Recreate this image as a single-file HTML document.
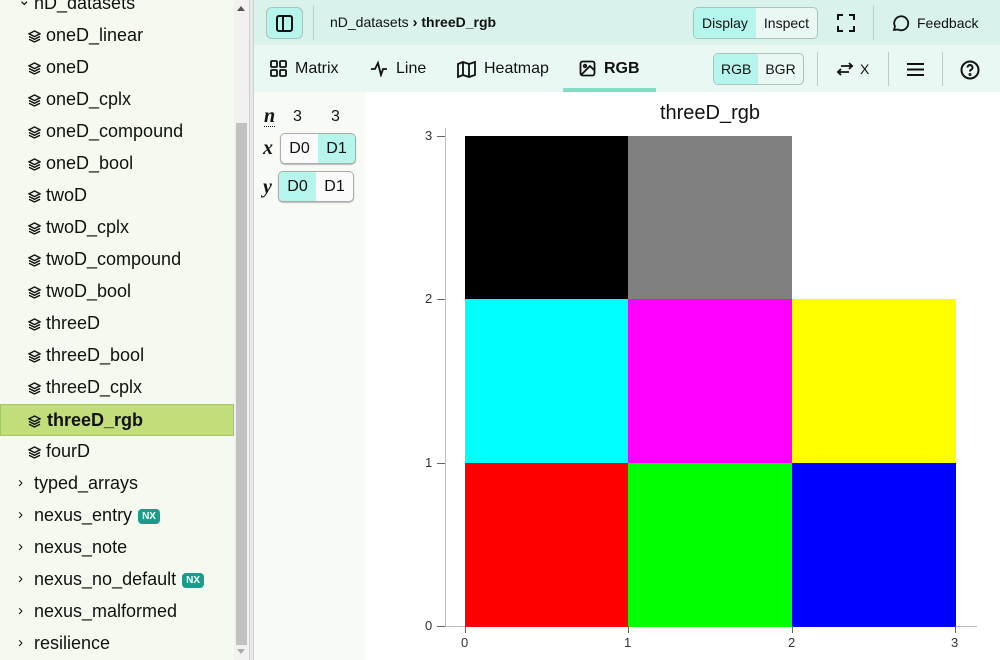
<!DOCTYPE html>
<html><head><meta charset="utf-8"><style>
*{box-sizing:border-box;margin:0;padding:0}
body{width:1000px;height:660px;overflow:hidden;font-family:"Liberation Sans",sans-serif;background:#fff;position:relative;color:#111}
.side{position:absolute;left:0;top:0;width:234px;height:660px;background:#f4faf0}
.row{position:absolute;left:0;width:234px;height:32px;font-size:18px;line-height:32px;white-space:nowrap}
.row.ds{padding-left:46px}
.row.gr{padding-left:34px}
.row svg.ic{position:absolute;left:28px;top:11px}
.row .ch{position:absolute;left:18px;top:0;font-size:15px}
.sel{background:#c2de7a;border:1px solid #a3c765;font-weight:bold;line-height:30px}
.sel svg.ic{top:10px;left:27px}
.nx{display:inline-block;background:#1a9c8a;color:#fff;font-size:10px;font-weight:bold;border-radius:4px;padding:0 4px;line-height:15px;vertical-align:2px;margin-left:6px}
.sb{position:absolute;left:234px;top:0;width:15px;height:660px;background:#f1f1f1}
.thumb{position:absolute;left:236px;top:123px;width:11px;height:522px;background:#c1c1c1}
.bd{position:absolute;left:249px;top:0;width:5px;height:660px;background:#e8e8e8;border-left:1px solid #d0d0d0;border-right:1px solid #d0d0d0}
.top{position:absolute;left:254px;top:0;width:746px;height:45px;background:#d9f3ec}
.tabs{position:absolute;left:254px;top:45px;width:746px;height:47px;background:#e9f8f3}
.dim{position:absolute;left:254px;top:92px;width:111px;height:568px;background:#f7faf5}
.btn{position:absolute;border:1px solid #a9c3bb;border-radius:5px;font-size:14px;overflow:hidden;display:flex;background:#eaf8f3}
.btn span{display:block;padding:0 8px;line-height:28px}
.on{background:#b6f5ec}
.vs{position:absolute;width:1px;background:#b9cdc7}
.tab{position:absolute;top:45px;height:47px;line-height:46px;font-size:16px;display:flex;align-items:center;gap:8px}
.dbtn{position:absolute;display:flex;border:1px solid #aaa;border-radius:5px;overflow:hidden;font-size:16px;background:#fafafa;box-shadow:0 1px 1px #bbb}
.dbtn span{display:block;width:37px;text-align:center;line-height:29px}
.dlab{position:absolute;font-family:"Liberation Serif",serif;font-weight:bold;font-style:italic;font-size:20px}
.c{position:absolute;width:164px;height:164px}
.t{position:absolute;font-size:13px;color:#333}
</style></head><body>
<div class="side">
<div class="row gr" style="top:-13px"><span class="ch" style="top:-2px">⌄</span>nD_datasets</div>
<div id="items"></div>
</div>
<div class="sb"></div><div class="thumb"></div>
<div style="position:absolute;left:237px;top:6px;width:0;height:0;border-left:4px solid transparent;border-right:4px solid transparent;border-bottom:5px solid #555"></div>
<div style="position:absolute;left:237px;top:649px;width:0;height:0;border-left:4px solid transparent;border-right:4px solid transparent;border-top:5px solid #aaa"></div>
<div class="bd"></div>

<div class="top"></div>
<div style="position:absolute;left:266px;top:7px;width:37px;height:32px;background:#b6f5ec;border:1px solid #a9c3bb;border-radius:6px"></div>
<svg style="position:absolute;left:275px;top:14px" width="19" height="19" viewBox="0 0 19 19" fill="none" stroke="#111" stroke-width="2"><rect x="2" y="2" width="15" height="15" rx="2"/><line x1="8" y1="2" x2="8" y2="17"/></svg>
<div class="vs" style="left:313px;top:6px;height:34px"></div>
<div style="position:absolute;left:330px;top:14px;font-size:14px">nD_datasets <b style="font-size:15px">›</b> <b>threeD_rgb</b></div>
<div class="btn" style="left:693px;top:7px;height:32px"><span class="on" style="line-height:30px">Display</span><span style="line-height:30px">Inspect</span></div>
<svg style="position:absolute;left:837px;top:14px" width="18" height="18" viewBox="0 0 18 18" fill="none" stroke="#111" stroke-width="2"><path d="M1 6V1h5M12 1h5v5M17 12v5h-5M6 17H1v-5"/></svg>
<div class="vs" style="left:873px;top:6px;height:34px"></div>
<svg style="position:absolute;left:891px;top:14px" width="19" height="19" viewBox="0 0 19 19" fill="none" stroke="#111" stroke-width="1.8"><path d="M3 16l1-3.5A7 7 0 1 1 7 15.5Z"/></svg>
<div style="position:absolute;left:917px;top:15px;font-size:14px">Feedback</div>

<div class="tabs"></div>
<div class="tab" style="left:270px"><svg width="17" height="17" viewBox="0 0 17 17" fill="none" stroke="#111" stroke-width="1.8"><rect x="1" y="1" width="6" height="6" rx="1"/><rect x="10" y="1" width="6" height="6" rx="1"/><rect x="1" y="10" width="6" height="6" rx="1"/><rect x="10" y="10" width="6" height="6" rx="1"/></svg>Matrix</div>
<div class="tab" style="left:370px"><svg width="18" height="17" viewBox="0 0 18 17" fill="none" stroke="#111" stroke-width="1.8"><path d="M1 9h4l3-6 3 12 2-6h4"/></svg>Line</div>
<div class="tab" style="left:457px"><svg width="19" height="18" viewBox="0 0 19 18" fill="none" stroke="#111" stroke-width="1.8"><path d="M1 4l5-2 6 2 6-2v13l-6 2-6-2-5 2zM6 2v13M12 4v13"/></svg>Heatmap</div>
<div class="tab" style="left:579px;font-weight:bold"><svg width="17" height="17" viewBox="0 0 17 17" fill="none" stroke="#111" stroke-width="1.8"><rect x="1.5" y="1.5" width="14" height="14" rx="2"/><circle cx="6" cy="6" r="1.3"/><path d="M15 10l-4-4-9 9"/></svg>RGB</div>
<div style="position:absolute;left:563px;top:88px;width:93px;height:4px;background:#84dcc4"></div>
<div class="btn" style="left:713px;top:53px;height:32px"><span class="on" style="line-height:30px;padding:0 7px">RGB</span><span style="line-height:30px;padding:0 7px">BGR</span></div>
<div class="vs" style="left:817px;top:52px;height:34px"></div>
<svg style="position:absolute;left:836px;top:62px" width="18" height="14" viewBox="0 0 18 14" fill="none" stroke="#111" stroke-width="1.8"><path d="M5 4h12M13 1l3 3-3 3M13 10H1M5 7l-3 3 3 3"/></svg>
<div style="position:absolute;left:860px;top:61px;font-size:14px">X</div>
<div class="vs" style="left:888px;top:52px;height:34px"></div>
<svg style="position:absolute;left:906px;top:62px" width="19" height="15" viewBox="0 0 19 15" stroke="#111" stroke-width="2"><path d="M1 2h17M1 7.5h17M1 13h17"/></svg>
<div class="vs" style="left:942px;top:52px;height:34px"></div>
<svg style="position:absolute;left:960px;top:60px" width="20" height="20" viewBox="0 0 20 20" fill="none" stroke="#111" stroke-width="2"><circle cx="10" cy="10" r="8.5"/><path d="M7.5 7.5a2.5 2.5 0 1 1 3.5 2.3c-.7.4-1 .9-1 1.7"/><circle cx="10" cy="14.5" r=".5" fill="#111"/></svg>

<div class="dim"></div>
<div class="dlab" style="left:264px;top:106px;border-bottom:1px dotted #111;line-height:20px">n</div>
<div style="position:absolute;left:293px;top:108px;font-size:16px">3</div>
<div style="position:absolute;left:331px;top:108px;font-size:16px">3</div>
<div class="dlab" style="left:263px;top:137px">x</div>
<div class="dbtn" style="left:280px;top:133px"><span>D0</span><span class="on">D1</span></div>
<div class="dlab" style="left:263px;top:176px">y</div>
<div class="dbtn" style="left:278px;top:171px"><span class="on">D0</span><span>D1</span></div>

<div style="position:absolute;left:600px;top:102px;width:220px;text-align:center;font-size:20px">threeD_rgb</div>
<div style="position:absolute;left:445px;top:128px;width:1px;height:498px;background:#bbb"></div>
<div style="position:absolute;left:445px;top:626px;width:532px;height:1px;background:#bbb"></div>
<div class="c" style="left:465px;top:136px;background:#000"></div>
<div class="c" style="left:628px;top:136px;background:#808080"></div>
<div class="c" style="left:465px;top:299px;background:#0ff"></div>
<div class="c" style="left:628px;top:299px;background:#f0f"></div>
<div class="c" style="left:792px;top:299px;background:#ff0"></div>
<div class="c" style="left:465px;top:463px;background:#f00"></div>
<div class="c" style="left:628px;top:463px;background:#0f0"></div>
<div class="c" style="left:792px;top:463px;background:#00f"></div>
<div id="ax"></div>
<script>
var it=[["oneD_linear",1],["oneD",1],["oneD_cplx",1],["oneD_compound",1],["oneD_bool",1],["twoD",1],["twoD_cplx",1],["twoD_compound",1],["twoD_bool",1],["threeD",1],["threeD_bool",1],["threeD_cplx",1],["threeD_rgb",2],["fourD",1],["typed_arrays",0],["nexus_entry",0,1],["nexus_note",0],["nexus_no_default",0,1],["nexus_malformed",0],["resilience",0]];
var ic='<svg class="ic" width="13" height="13" viewBox="0 0 13 13" fill="none" stroke="#111" stroke-width="1.4"><path d="M6.5 1L12 3.8 6.5 6.6 1 3.8Z"/><path d="M1 6.5l5.5 2.8L12 6.5M1 9.2L6.5 12 12 9.2"/></svg>';
var h="";it.forEach(function(a,i){var t=19+i*32;
if(a[1]) h+='<div class="row ds'+(a[1]==2?' sel':'')+'" style="top:'+(a[1]==2?t+1:t)+'px">'+ic+a[0]+'</div>';
else h+='<div class="row gr" style="top:'+t+'px"><span class="ch">›</span>'+a[0]+(a[2]?'<span class="nx">NX</span>':'')+'</div>';});
document.getElementById("items").innerHTML=h;
var g="";
[[0,626],[1,463],[2,299],[3,136]].forEach(function(p){g+='<div style="position:absolute;left:437px;top:'+p[1]+'px;width:8px;height:1px;background:#666"></div><div class="t" style="left:425px;top:'+(p[1]-8)+'px">'+p[0]+'</div>';});
[[0,465],[1,628],[2,792],[3,955]].forEach(function(p){g+='<div style="position:absolute;left:'+p[1]+'px;top:626px;width:1px;height:7px;background:#666"></div><div class="t" style="left:'+(p[1]-4)+'px;top:635px">'+p[0]+'</div>';});
document.getElementById("ax").innerHTML=g;
</script>
</body></html>
